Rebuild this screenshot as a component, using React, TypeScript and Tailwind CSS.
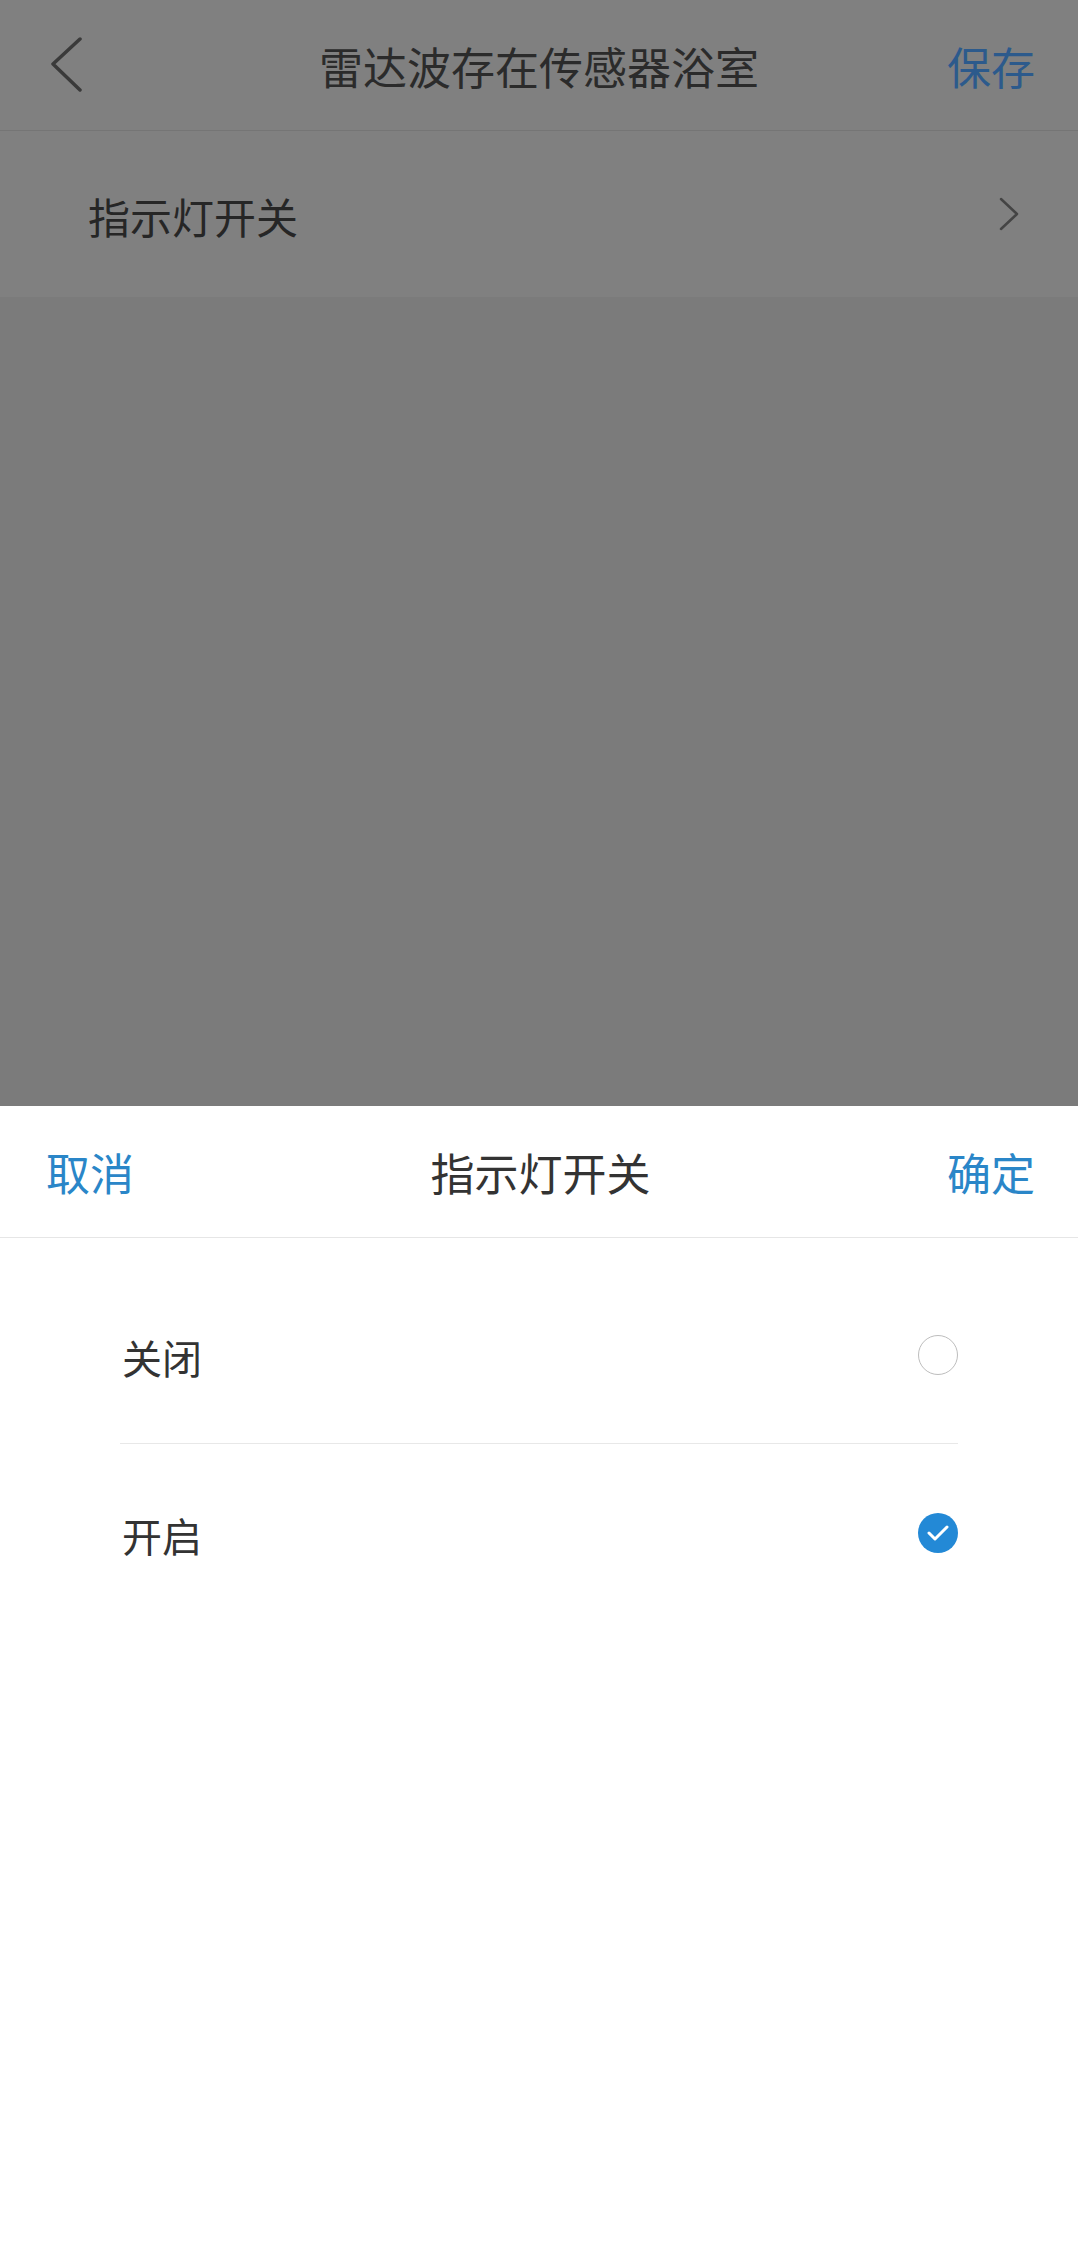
import { useState } from 'react';

const options = [
  { key: 'off', label: '关闭' },
  { key: 'on', label: '开启' },
];

export default function App() {
  const [value, setValue] = useState('on');

  return (
    <div
      className="w-[1078px] h-[2262px] flex flex-col overflow-hidden"
      style={{ fontFamily: '"Noto Sans CJK SC", "Noto Sans", sans-serif' }}
    >
      {/* dimmed page behind the sheet */}
      <div className="h-[1106px] flex flex-col bg-[#7b7b7b]">
        <div className="bg-[#808080]">
          <div className="h-[131px] grid grid-cols-[1fr_auto_1fr] items-center border-b border-[#757575]">
            <div className="pl-[50px]">
              <svg width="34" height="56" viewBox="0 0 34 56" fill="none">
                <polyline points="30,2 3,27 30,53" stroke="#3a3a3a" strokeWidth="3.5" strokeLinecap="round" strokeLinejoin="round" />
              </svg>
            </div>
            <div className="text-[44px] leading-none text-[#2b2b2b] pt-[2px]">雷达波存在传感器浴室</div>
            <div className="text-right pr-[43px] text-[44px] leading-none text-[#2c5a8c] pt-[2px]">保存</div>
          </div>
          <div className="h-[166px] flex items-center justify-between pl-[88px] pr-[57px]">
            <span className="text-[42px] leading-none text-[#262626] pt-[4px]">指示灯开关</span>
            <svg width="24" height="34" viewBox="0 0 24 34" fill="none">
              <polyline points="4,2 20,17 4,32" stroke="#444" strokeWidth="2.5" strokeLinecap="round" strokeLinejoin="round" />
            </svg>
          </div>
        </div>
      </div>

      {/* bottom sheet */}
      <div className="flex-1 bg-white">
        <div className="h-[132px] flex items-center justify-between pl-[46px] pr-[43px] border-b border-[#e6e6e6]">
          <button className="text-[44px] leading-none text-[#2a86c8]">取消</button>
          <span className="text-[44px] leading-none text-[#333]">指示灯开关</span>
          <button className="text-[44px] leading-none text-[#2a86c8]">确定</button>
        </div>
        <div className="pt-[28px] mx-[120px]">
          {options.map((o, i) => (
            <div
              key={o.key}
              onClick={() => setValue(o.key)}
              className={`h-[178px] flex items-center justify-between ${i === 0 ? 'border-b border-[#e8e8e8]' : ''}`}
            >
              <span className="text-[40px] leading-none text-[#333] pl-[2px] pt-[4px]">{o.label}</span>
              {value === o.key ? (
                <span className="w-[40px] h-[40px] rounded-full bg-[#2389d6] flex items-center justify-center">
                  <svg width="22" height="16" viewBox="0 0 22 16" fill="none">
                    <polyline points="2,8 8,14 20,2" stroke="white" strokeWidth="3" strokeLinecap="round" strokeLinejoin="round" />
                  </svg>
                </span>
              ) : (
                <span className="w-[40px] h-[40px] rounded-full border-[1.5px] border-[#bdbdbd]" />
              )}
            </div>
          ))}
        </div>
      </div>
    </div>
  );
}
